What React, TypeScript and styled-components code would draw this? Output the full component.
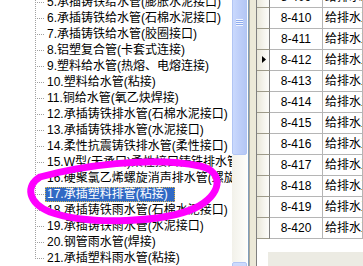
import React from "react";
import styled, { createGlobalStyle } from "styled-components";

const GlobalStyle = createGlobalStyle`
  html, body {
    margin: 0;
    padding: 0;
    width: 363px;
    height: 266px;
    overflow: hidden;
    background: #ffffff;
    font-family: "Liberation Sans", "Noto Sans CJK SC", sans-serif;
  }
`;

const Screen = styled.div`
  position: relative;
  display: flex;
  width: 363px;
  height: 266px;
  overflow: hidden;
  background: #ffffff;
`;

const TreePanel = styled.div`
  display: flex;
  width: 249px;
  height: 100%;
  box-sizing: border-box;
  padding-right: 1px;
  border-right: 1px solid #7f9db9;
  background: #ffffff;
`;

const TreeArea = styled.div`
  width: 232px;
  height: 100%;
  overflow: hidden;
`;

const TreeList = styled.ul`
  list-style: none;
  margin: -6px 0 0 0;
  padding: 0;
`;

const TreeRow = styled.li`
  display: flex;
  align-items: flex-start;
  height: 16px;
  white-space: nowrap;
`;

const Connector = styled.span`
  display: flex;
  align-items: flex-start;
  flex-shrink: 0;
  width: 10px;
  height: 16px;
  margin-left: 35px;
`;

const VLine = styled.span<{ $last?: boolean }>`
  width: 1px;
  height: ${(p) => (p.$last ? "9px" : "16px")};
  background: repeating-linear-gradient(
    to bottom,
    #a0a0a0 0 1px,
    transparent 1px 2px
  );
`;

const HLine = styled.span`
  width: 9px;
  height: 1px;
  margin-top: 8px;
  background: repeating-linear-gradient(
    to right,
    transparent 0 1px,
    #a0a0a0 1px 2px
  );
`;

const Label = styled.span<{ $selected?: boolean }>`
  display: inline-block;
  height: 15px;
  line-height: 15px;
  padding: ${(p) => (p.$selected ? "0 7px 0 2px" : "0 4px 0 2px")};
  margin-top: 1px;
  font-size: 12px;
  color: ${(p) => (p.$selected ? "#ffffff" : "#000000")};
  background: ${(p) => (p.$selected ? "#316ac5" : "transparent")};
  outline: ${(p) => (p.$selected ? "1px dotted #d9b24a" : "none")};
  outline-offset: -1px;
`;

const ScrollBar = styled.div`
  display: flex;
  flex-direction: column;
  width: 15px;
  height: 100%;
  overflow: hidden;
`;

const Thumb = styled.div`
  flex-shrink: 0;
  height: 157px;
  margin-top: -2px;
  box-sizing: border-box;
  border: 1px solid #b1c5f4;
  border-radius: 2px;
  background: linear-gradient(to right, #cad9fd, #bccdf8 60%, #b4c7f5);
  padding-top: 20px;
`;

const Grip = styled.div`
  width: 7px;
  height: 7px;
  margin: 0 auto;
  background: repeating-linear-gradient(
    to bottom,
    #f1f5fe 0 1px,
    #8eabee 1px 2px
  );
`;

const Track = styled.div`
  flex-shrink: 0;
  height: 107px;
  background: linear-gradient(to right, #f2f1ea, #fdfdfa);
`;

const ArrowButton = styled.div`
  flex-shrink: 0;
  height: 17px;
  box-sizing: border-box;
  border: 1px solid #b1c5f4;
  border-radius: 2px;
  background: linear-gradient(to bottom, #cfdcfd, #b6c9f6);
`;

const Splitter = styled.div`
  flex-shrink: 0;
  width: 7px;
  height: 100%;
  background: linear-gradient(to right, #aca899 0 1px, #ece9d8 1px);
`;

const Grid = styled.div`
  display: flex;
  flex-direction: column;
  flex: 1;
  height: 100%;
  overflow: hidden;
  border-left: 1px solid #808080;
  font-size: 12px;
`;

const Rows = styled.div`
  margin-top: -13px;
`;

const GridRow = styled.div`
  display: grid;
  grid-template-columns: 13px 53px 1fr;
  height: 21px;
`;

const RowHeader = styled.div`
  box-sizing: border-box;
  border-right: 1px solid #808080;
  border-bottom: 1px solid #9d9a8a;
  background: linear-gradient(to right, #e9e7da, #f6f5ef 60%, #fdfdfb);
`;

const Indicator = styled.svg`
  display: block;
  margin: 6px 0 0 5px;
`;

const Cell = styled.div<{ $center?: boolean }>`
  box-sizing: border-box;
  border-right: 1px solid #b5b5b5;
  border-bottom: 1px solid #b5b5b5;
  line-height: 20px;
  white-space: nowrap;
  overflow: hidden;
  color: #000000;
  text-align: ${(p) => (p.$center ? "center" : "left")};
  padding-left: ${(p) => (p.$center ? "0" : "2px")};
`;

const Filler = styled.div`
  flex: 1;
  background: #ffffff;
`;

const BottomBar = styled.div`
  display: flex;
  height: 14px;
  flex-shrink: 0;
`;

const BottomGap = styled.div`
  width: 11px;
  background: #ffffff;
`;

const BottomFill = styled.div`
  flex: 1;
  background: #ecebe3;
`;

const Marker = styled.svg`
  position: absolute;
  left: 0;
  top: 0;
  pointer-events: none;
`;

const items = [
  "5.承插铸铁给水管(膨胀水泥接口)",
  "6.承插铸铁给水管(石棉水泥接口)",
  "7.承插铸铁给水管(胶圈接口)",
  "8.铝塑复合管(卡套式连接)",
  "9.塑料给水管(热熔、电熔连接)",
  "10.塑料给水管(粘接)",
  "11.铜给水管(氧乙炔焊接)",
  "12.承插铸铁排水管(石棉水泥接口)",
  "13.承插铸铁排水管(水泥接口)",
  "14.柔性抗震铸铁排水管(柔性接口)",
  "15.W型(无承口)柔性接口铸铁排水管",
  "16.硬聚氯乙烯螺旋消声排水管(螺旋接口)",
  "17.承插塑料排管(粘接)",
  "18.承插铸铁雨水管(石棉水泥接口)",
  "19.承插铸铁雨水管(水泥接口)",
  "20.钢管雨水管(焊接)",
  "21.承插塑料雨水管(粘接)",
];

const codes = [
  "8-409",
  "8-410",
  "8-411",
  "8-412",
  "8-413",
  "8-414",
  "8-415",
  "8-416",
  "8-417",
  "8-418",
  "8-419",
  "8-420",
];

const App = () => {
  return (
    <>
      <GlobalStyle />
      <Screen>
        <TreePanel>
          <TreeArea>
            <TreeList>
              {items.map((text, i) => (
                <TreeRow key={text}>
                  <Connector>
                    <VLine $last={i === items.length - 1} />
                    <HLine />
                  </Connector>
                  <Label $selected={text.startsWith("17.")}>{text}</Label>
                </TreeRow>
              ))}
            </TreeList>
          </TreeArea>
          <ScrollBar>
            <Thumb>
              <Grip />
            </Thumb>
            <Track />
            <ArrowButton />
          </ScrollBar>
        </TreePanel>
        <Splitter />
        <Grid>
          <Rows>
            {codes.map((code) => (
              <GridRow key={code}>
                <RowHeader>
                  {code === "8-412" && (
                    <Indicator width="4" height="7" viewBox="0 0 4 7">
                      <polygon points="0,0 4,3.5 0,7" fill="#000000" />
                    </Indicator>
                  )}
                </RowHeader>
                <Cell $center>{code}</Cell>
                <Cell>给排水工程</Cell>
              </GridRow>
            ))}
          </Rows>
          <Filler />
          <BottomBar>
            <BottomGap />
            <BottomFill />
          </BottomBar>
        </Grid>
        <Marker width="363" height="266" viewBox="0 0 363 266">
          <path
            d="M 40,177 C 80,166 150,156 200,166 C 225,172 222,195 195,208 C 165,222 90,226 50,212 C 28,203 25,186 40,177 Z"
            fill="none"
            stroke="#ff00ff"
            strokeWidth="7"
          />
        </Marker>
      </Screen>
    </>
  );
};

export default App;
